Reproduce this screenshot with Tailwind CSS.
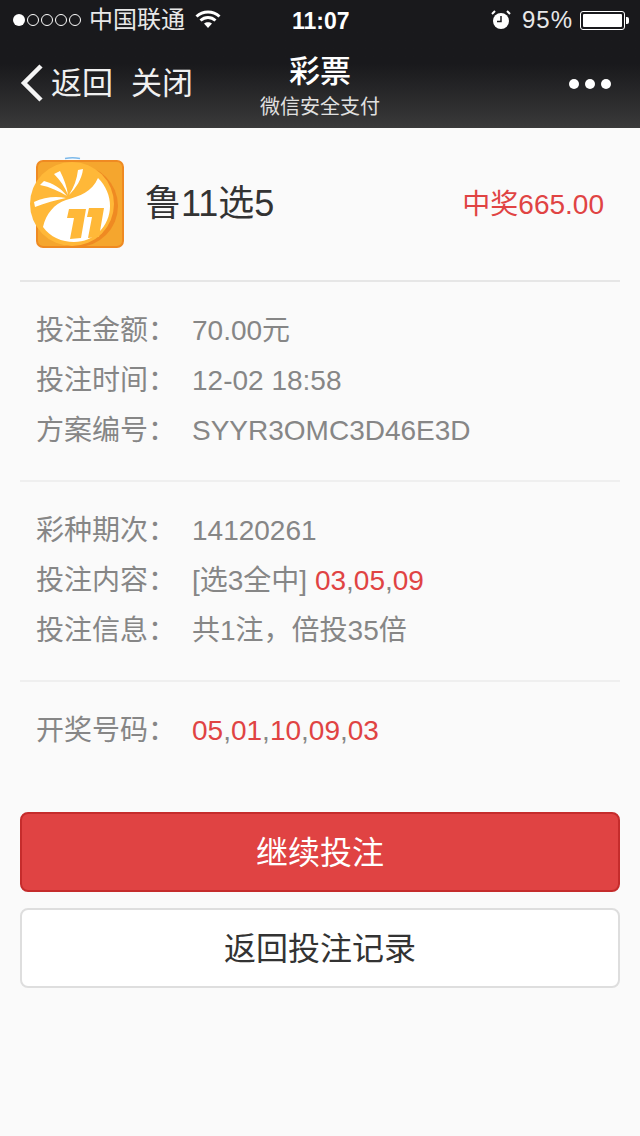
<!DOCTYPE html>
<html lang="zh-CN">

<head>
    <meta charset="UTF-8">
    <meta name="viewport" content="width=device-width, initial-scale=1.0">
    <title>彩票</title>
    <script src="https://cdn.jsdelivr.net/npm/@tailwindcss/browser@4"></script>
</head>

<body class="bg-[#fafafa] h-[1136px] w-[640px] overflow-hidden font-['Liberation_Sans','Noto_Sans_CJK_SC',sans-serif]">
    <header class="h-[128px] bg-gradient-to-b from-[#19191c] from-50% to-[#3a3a3a] text-white">
        <!-- status bar -->
        <div class="h-[40px] flex items-center justify-between pl-[13px] pr-[11px] relative text-[24px] text-[#e8e8e8]">
            <div class="flex items-center">
                <div class="flex gap-[2px]">
                    <span class="w-[12px] h-[12px] rounded-full bg-white"></span>
                    <span class="w-[12px] h-[12px] rounded-full border border-white"></span>
                    <span class="w-[12px] h-[12px] rounded-full border border-white"></span>
                    <span class="w-[12px] h-[12px] rounded-full border border-white"></span>
                    <span class="w-[12px] h-[12px] rounded-full border border-white"></span>
                </div>
                <span class="ml-[8px]">中国联通</span>
                <svg class="ml-[10px] mb-[3px]" width="26" height="20" viewBox="0 0 26 20" fill="none" stroke="#fff" stroke-width="3">
                    <path d="M1.5 7.5C8 1.5 18 1.5 24.5 7.5" />
                    <path d="M5.5 11.5C10 7.5 16 7.5 20.5 11.5" />
                    <path d="M13 19l-4-4.5c2.300-1.800 5.700-1.800 8 0z" fill="#fff" stroke="none" />
                </svg>
            </div>
            <span class="absolute left-[292px] top-[4px] text-[23px] font-bold text-white">11:07</span>
            <div class="flex items-center">
                <svg width="20" height="20" viewBox="0 0 20 20">
                    <circle cx="10" cy="11" r="8" fill="#fff" />
                    <path d="M10 6v5.500H6" fill="none" stroke="#19191c" stroke-width="1.500" />
                    <path d="M1 4l3-3M19 4l-3-3" stroke="#fff" stroke-width="2" />
                </svg>
                <span class="ml-[11px] tracking-[1px]">95%</span>
                <div class="ml-[7px] w-[45px] h-[19px] border border-white rounded-[3px] p-[2px]">
                    <div class="h-full w-full bg-white rounded-[1px]"></div>
                </div>
                <div class="ml-[1px] w-[3px] h-[7px] bg-white rounded-r-[2px]"></div>
            </div>
        </div>
        <!-- nav bar -->
        <div class="h-[88px] flex items-center justify-between relative">
            <div class="flex items-center pl-[20px] mt-[-3px] text-[31px] text-[#f0f0f0]">
                <svg class="mt-[1px]" width="24" height="38" viewBox="0 0 24 38" fill="none" stroke="#f5f5f5" stroke-width="4.500">
                    <path d="M21 2L4 19l17 17" />
                </svg>
                <span class="ml-[7px] mt-[3px]">返回</span>
                <span class="ml-[18px] mt-[3px]">关闭</span>
            </div>
            <div class="absolute left-0 right-0 top-[10px] flex flex-col items-center">
                <span class="text-[31px] leading-[44px] font-medium">彩票</span>
                <span class="text-[20px] leading-[26px] text-[#e0e0e0]">微信安全支付</span>
            </div>
            <div class="flex gap-[6px] pr-[29px]">
                <span class="w-[10px] h-[10px] rounded-full bg-white"></span>
                <span class="w-[10px] h-[10px] rounded-full bg-white"></span>
                <span class="w-[10px] h-[10px] rounded-full bg-white"></span>
            </div>
        </div>
    </header>

    <main class="px-[20px]">
        <section class="h-[154px] flex items-center border-b-2 border-[#e6e6e6] pr-[16px]">
            <div class="w-[104px] h-[104px] ml-[10px] shrink-0">
                <svg width="104" height="104" viewBox="0 0 104 104">
                    <path d="M35 6.500q7.500-1.500 15 0" fill="none" stroke="#7cb9ea" stroke-width="1.500" />
                    <rect x="7" y="9" width="86" height="86" rx="6" fill="#f5a62e" stroke="#ef8a22" stroke-width="2" />
                    <circle cx="47" cy="54" r="41" fill="#ef8a22" />
                    <circle cx="42" cy="52" r="42" fill="#ffb838" />
                    <path d="M68 26C62 40 50 44 36 48C24 52 16 62 13 75C20 85 32 90 44 90C64 90 80 74 80 54C80 44 76 34 68 26z" fill="#fff" />
                    <path d="M24 22L30 19C34 27 37 35 38 43C35 35 30 28 24 22zM48 18L53 17C52 27 46 36 39 43C44 35 47 27 48 18zM10 33L14 29C22 31 31 36 37 44C29 39 20 35 10 33zM5 55L4 50C14 45 26 44 36 46C26 48 15 51 5 55z" fill="#fff" />
                    <path d="M39 57L56 57L51 86L40 87L44 66L37 66zM59 56L74 56L69 85L58 86L62 65L57 65z" fill="#ffb838" />
                </svg>
            </div>
            <span class="ml-[11px] text-[36px] text-[#333]">鲁11选5</span>
            <span class="ml-auto mt-[2px] text-[28px] text-[#e04343]">中奖665.00</span>
        </section>

        <section class="h-[200px] pt-[24px] border-b-2 border-[#efefef] pl-[16px] text-[28px] leading-[50px] text-[#868686]">
            <div class="flex"><span class="w-[156px] shrink-0">投注金额&#xFF1A;</span><span>70.00元</span></div>
            <div class="flex"><span class="w-[156px] shrink-0">投注时间&#xFF1A;</span><span>12-02 18:58</span></div>
            <div class="flex"><span class="w-[156px] shrink-0">方案编号&#xFF1A;</span><span>SYYR3OMC3D46E3D</span></div>
        </section>

        <section class="h-[200px] pt-[24px] border-b-2 border-[#efefef] pl-[16px] text-[28px] leading-[50px] text-[#868686]">
            <div class="flex"><span class="w-[156px] shrink-0">彩种期次&#xFF1A;</span><span>14120261</span></div>
            <div class="flex"><span class="w-[156px] shrink-0">投注内容&#xFF1A;</span><span>[选3全中] <span class="text-[#e04343]">03</span>,<span class="text-[#e04343]">05</span>,<span class="text-[#e04343]">09</span></span></div>
            <div class="flex"><span class="w-[156px] shrink-0">投注信息&#xFF1A;</span><span>共1注&#xFF0C;倍投35倍</span></div>
        </section>

        <section class="pt-[24px] pl-[16px] text-[28px] leading-[50px] text-[#868686]">
            <div class="flex"><span class="w-[156px] shrink-0">开奖号码&#xFF1A;</span><span><span class="text-[#e04343]">05</span>,<span class="text-[#e04343]">01</span>,<span class="text-[#e04343]">10</span>,<span class="text-[#e04343]">09</span>,<span class="text-[#e04343]">03</span></span></div>
        </section>

        <div class="mt-[56px] flex flex-col gap-[16px]">
            <button class="h-[80px] pt-[2px] rounded-[8px] border-2 border-[#c52c2c] bg-[#e04343] text-white text-[32px]">继续投注</button>
            <button class="h-[80px] pt-[2px] rounded-[8px] border-2 border-[#dedede] bg-white text-[#333] text-[32px]">返回投注记录</button>
        </div>
    </main>
</body>

</html>
